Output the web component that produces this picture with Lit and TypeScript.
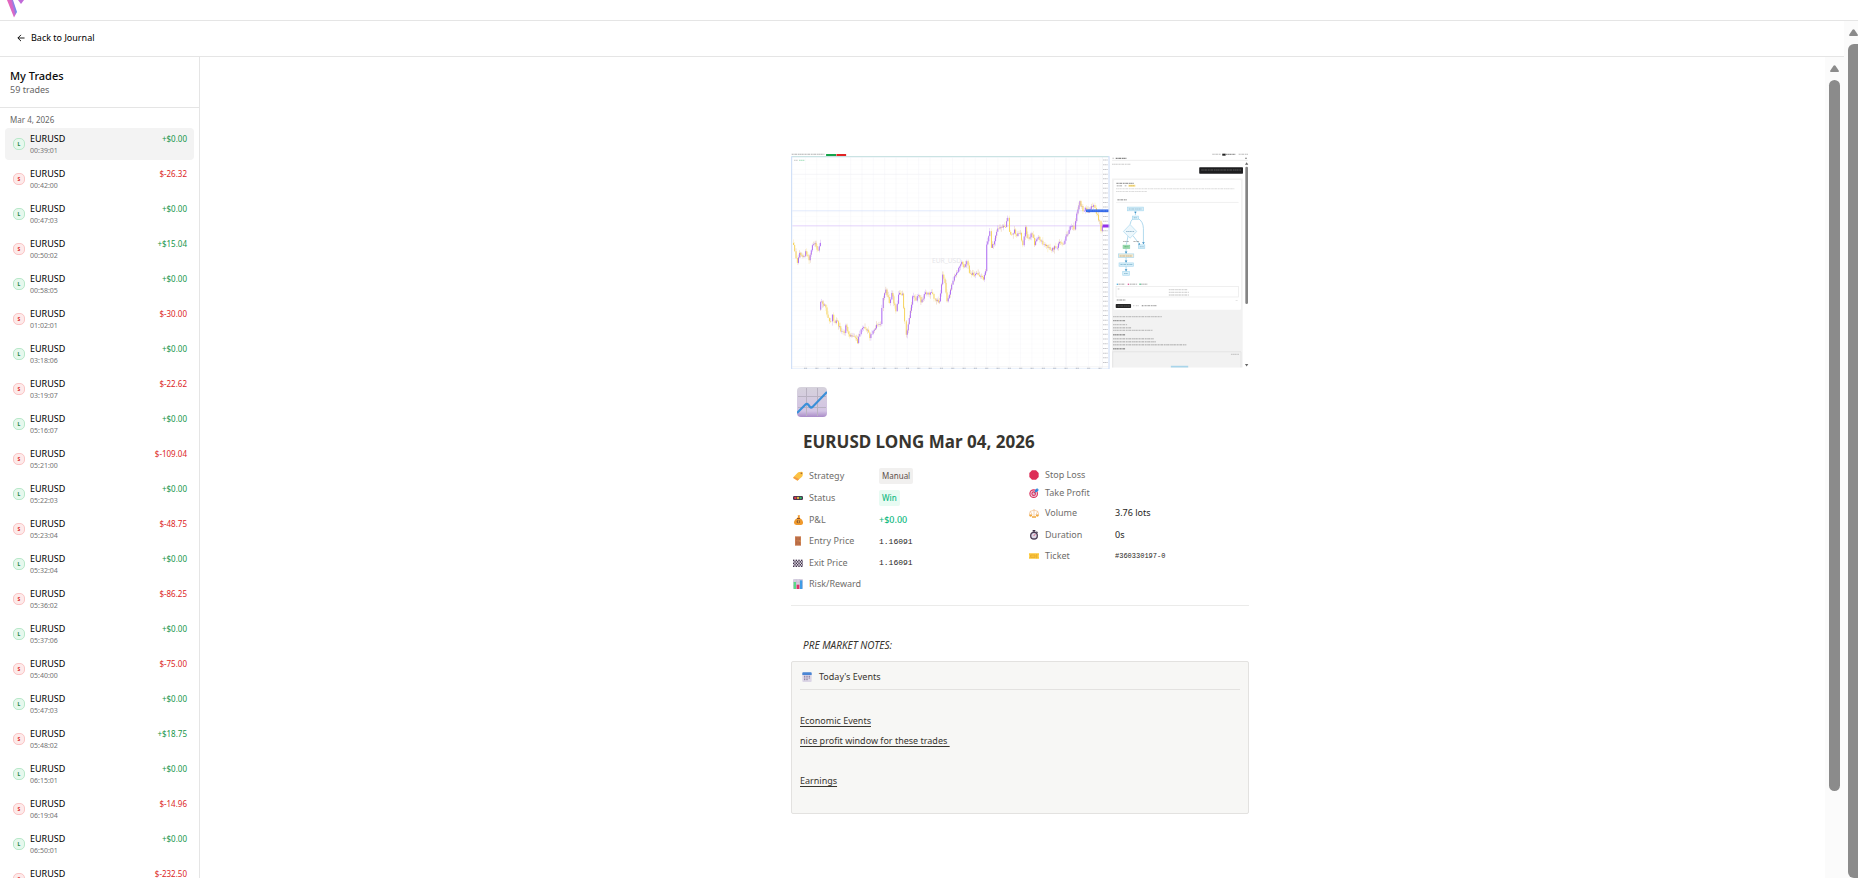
import { LitElement, html, css, svg, nothing } from "lit";
import { customElement } from "lit/decorators.js";

type Trade = [string, string, string];

const trades: Trade[] = [
  ["L", "00:39:01", "+$0.00"],
  ["S", "00:42:00", "$-26.32"],
  ["L", "00:47:03", "+$0.00"],
  ["S", "00:50:02", "+$15.04"],
  ["L", "00:58:05", "+$0.00"],
  ["S", "01:02:01", "$-30.00"],
  ["L", "03:18:06", "+$0.00"],
  ["S", "03:19:07", "$-22.62"],
  ["L", "05:16:07", "+$0.00"],
  ["S", "05:21:00", "$-109.04"],
  ["L", "05:22:03", "+$0.00"],
  ["S", "05:23:04", "$-48.75"],
  ["L", "05:32:04", "+$0.00"],
  ["S", "05:36:02", "$-86.25"],
  ["L", "05:37:06", "+$0.00"],
  ["S", "05:40:00", "$-75.00"],
  ["L", "05:47:03", "+$0.00"],
  ["S", "05:48:02", "+$18.75"],
  ["L", "06:15:01", "+$0.00"],
  ["S", "06:19:04", "$-14.96"],
  ["L", "06:50:01", "+$0.00"],
  ["S", "06:52:03", "$-232.50"],
];

const priceRuns: number[][] = [
  [40,305,47,330,55,365,62,335,75,345,80,330,90,357,100,312,108,305,117,328,124,305],
  [124,505,125,482,137,490,147,530,155,540,160,520,168,545,175,540,185,570,195,575,200,552,212,585,225,585,235,605,242,578,250,560,265,565,272,590,285,565,292,550,303,548,308,500,312,470,320,445,330,485,338,455,350,510,358,460,370,457,376,540,381,580,390,530,400,465,410,478,418,462,425,483,435,458,450,460,460,458,468,475,480,480,490,400,497,425,503,480,510,460,517,430,525,405,535,392,547,362,553,378,562,360,570,395,582,402,592,395,600,405,612,415,618,390,622,310,631,270,636,320,645,300,655,262,665,258,678,258,685,230,690,272,697,280,705,265,712,285,722,275,730,312,738,258,745,290,758,280,765,312,778,287,790,310,805,320,815,328,825,315,833,320,840,302,853,308,862,280,875,255,883,265,888,240,895,205,901,180,910,210,918,200,925,215,935,195,942,192,950,218,960,240,964,270,968,255],
];

const UP = "#b070f2";
const DOWN = "#f7d560";

function candles() {
  const out: unknown[] = [];
  let seed = 7;
  const rnd = () => (seed = (seed * 16807) % 2147483647) / 2147483647;
  for (const run of priceRuns) {
    let y = run[1];
    for (let i = 0; i + 3 < run.length; i += 2) {
      const [x0, y0, x1, y1] = run.slice(i, i + 4);
      const n = Math.max(1, Math.round((x1 - x0) / 3.4));
      for (let k = 1; k <= n; k++) {
        const x = x0 + ((x1 - x0) * k) / n;
        const target = y0 + ((y1 - y0) * k) / n + (k < n ? (rnd() - 0.5) * 12 : 0);
        const color = target <= y ? UP : DOWN;
        const top = Math.min(y, target);
        const h = Math.max(2, Math.abs(target - y));
        out.push(svg`<rect x=${x - 0.6} y=${top - 2 - rnd() * 9} width="1.2" height=${h + 6 + rnd() * 10} fill=${rnd() > 0.6 ? "#c98a5a" : color} opacity=".6"></rect>
          <rect x=${x - 1.5} y=${top} width="3" height=${h} fill=${color}></rect>`);
        y = target;
      }
    }
  }
  return out;
}

/* Rows of tiny dashes that stand for the unreadably small captions. */
const dash = (x: number, y: number, w: number, color = "#b5b5b5", h = 4) =>
  svg`<line x1=${x} y1=${y} x2=${x + w} y2=${y} stroke=${color} stroke-width=${h} stroke-dasharray="5 1 3 1 7 2" opacity=".55"></line>`;

const range = (a: number, b: number, step: number) => {
  const r: number[] = [];
  for (let v = a; v < b; v += step) r.push(v);
  return r;
};

const cover = svg`
  <rect x="36" y="36" width="1371" height="648" fill="#fff"></rect>
  ${dash(38, 40, 98, "#777", 3)}
  <rect x="141" y="39" width="30" height="6" fill="#16a34a"></rect>
  <rect x="172" y="39" width="29" height="6" fill="#e02424"></rect>
  ${dash(1297, 40, 26, "#888", 3)}
  <rect x="1327" y="38" width="10" height="6" fill="#222"></rect>
  ${dash(1338, 40, 28, "#444", 4)}${dash(1376, 40, 28, "#888", 3)}
  ${range(57, 660, 14.1).map((y) => svg`<path d="M40 ${y}H968" stroke="#f8f8fa" stroke-width="1"></path>`)}
  ${range(79, 965, 33.9).map((x) => svg`<path d="M${x} 50V676" stroke="#f5f5f8" stroke-width="1.5"></path>`)}
  <path d="M860 50V676M40 352H968M40 100H968" stroke="#efeff2" stroke-width="1.5"></path>
  <path d="M968 48V680M40 676H987" stroke="#e8e8ec" stroke-width="1.5"></path>
  ${range(57, 670, 14.1).map((y) => dash(970, y, 14, "#9a9aa2", 3))}
  ${range(75, 965, 33.9).map((x) => dash(x, 681, 10, "#8a8a90", 4))}
  <text class="mark" x="458" y="366">EUR_USD</text>
  <path d="M40 209H987" stroke="#d4e0fb" stroke-width="2"></path>
  <path d="M40 254H987" stroke="#e0cafa" stroke-width="2.5"></path>
  ${candles()}
  <rect x="919" y="205" width="68" height="8" fill="#2f66e8"></rect>
  ${dash(921, 209, 62, "#8fb0f8", 2)}
  <rect x="969" y="250" width="20" height="9" fill="#9333ea"></rect>
  <rect x="38" y="47" width="950" height="636" fill="none" stroke="#c8daf6" stroke-width="3"></rect>
  <path d="M40 47H985" stroke="#c4e6d4" stroke-width="2"></path>
  ${dash(45, 58, 12)}${dash(60, 58, 16, "#7fd6a3")}
  <path d="M997 58H1404" stroke="#e5e5e5" stroke-width="2"></path>
  ${dash(998, 52, 6)}${dash(1008, 52, 32, "#222", 4)}<rect x="1396" y="50" width="4" height="4" fill="#777"></rect>
  ${dash(997, 70, 56, "#a5a5a5", 3)}
  <rect x="1258" y="79" width="131" height="19" rx="2" fill="#1d1d1f"></rect>
  ${dash(1264, 87, 120, "#8c8c8c", 3)}
  <path d="M997 112H1388V678H997Z" fill="#f2f2f2"></path>
  <rect x="1002" y="117" width="381" height="388" rx="3" fill="#fff"></rect>
  ${dash(1010, 127, 52, "#555", 4)}${dash(1011, 134, 16, "#999")}${dash(1035, 134, 5, "#999")}
  <rect x="1046" y="131" width="21" height="6" fill="#fbe7a0"></rect>${dash(1048, 134, 16, "#c9a227", 3)}
  ${dash(1009, 143, 354, "#c0c0c0", 3)}${dash(1009, 151, 92, "#c0c0c0", 3)}
  ${dash(1013, 176, 28, "#777", 4)}
  <path d="M1009 184H1376" stroke="#eaeaea" stroke-width="2"></path>
  <g fill="#d9eff9" stroke="#a9d8ee" stroke-width="2">
    <path d="M1067 210V222M1060 232Q1052 240 1051 250M1075 232Q1090 240 1091 262V306M1045 284L1040 310M1060 284L1080 310M1039 322V396" fill="none" stroke="#8cc8e6"></path>
    <rect x="1043" y="198" width="48" height="11"></rect>
    <rect x="1058" y="225" width="18" height="10"></rect>
    <path d="M1051 250L1071 271L1051 291L1031 271Z" fill="#edf7fc"></path>
    <rect x="1030" y="312" width="20" height="10" fill="#9fdcb0" stroke="#86cfa0"></rect>
    <rect x="1076" y="311" width="19" height="11"></rect>
    <rect x="1016" y="338" width="46" height="11" fill="#f7ead0"></rect>
    <rect x="1018" y="365" width="43" height="10"></rect>
    <rect x="1029" y="391" width="20" height="11"></rect>
  </g>
  <path d="M1067 217l-4 -5h8ZM1039 337l-4 -6h8ZM1039 364l-4 -6h8ZM1039 390l-4 -6h8ZM1081 311l-6-1 4-5ZM1091 309l-4-6h8Z" fill="#3a8fc4"></path>
  ${dash(1047, 204, 40, "#5b9dbd", 3)}${dash(1062, 230, 10, "#5b9dbd", 3)}${dash(1039, 271, 24, "#5b8fad", 3)}
  ${dash(1034, 317, 12, "#2f8a4c", 3)}${dash(1080, 317, 12, "#5b9dbd", 3)}${dash(1020, 344, 38, "#9a8a5a", 3)}
  ${dash(1022, 370, 36, "#5b9dbd", 3)}${dash(1033, 397, 12, "#5b9dbd", 3)}${dash(1030, 301, 18, "#777", 3)}${dash(1061, 301, 18, "#777", 3)}
  ${dash(1016, 429, 20, "#999")}${dash(1050, 429, 22, "#999")}${dash(1084, 429, 20, "#999")}
  <path d="M1011 429h4" stroke="#58b4e0" stroke-width="4"></path><path d="M1044 429h4" stroke="#e0589a" stroke-width="4"></path><path d="M1079 429h4" stroke="#50c088" stroke-width="4"></path>
  <rect x="1009" y="436" width="367" height="31" fill="none" stroke="#e8e8e8" stroke-width="2"></rect>
  ${dash(1014, 443, 6)}${dash(1167, 445, 56)}${dash(1167, 453, 60)}${dash(1167, 461, 60)}
  ${dash(1011, 476, 26, "#777")}<path d="M1368 477l2 2 2-2" stroke="#888" fill="none"></path>
  <rect x="1008" y="488" width="46" height="12" rx="2" fill="#262626"></rect>${dash(1014, 494, 36, "#777", 3)}
  ${dash(1060, 493, 4)}${dash(1068, 493, 10)}${dash(1086, 493, 5, "#555")}${dash(1094, 493, 36, "#777")}
  ${dash(1000, 526, 146, "#999")}${dash(1000, 538, 36, "#555")}
  ${dash(1000, 550, 42, "#999")}${dash(1000, 559, 54, "#999")}${dash(1000, 567, 118, "#999")}
  ${dash(1000, 580, 36, "#555")}
  ${dash(1000, 592, 122, "#999")}${dash(1000, 601, 128, "#999")}${dash(1000, 610, 220, "#999")}
  ${dash(1000, 622, 38, "#555")}
  <path d="M999 678V631H1383V678" fill="none" stroke="#e0e0e0" stroke-width="2"></path>
  ${dash(1353, 639, 24, "#aaa")}
  <rect x="1173" y="673" width="52" height="5" fill="#a8d5ea"></rect>
  <rect x="1396" y="77" width="8" height="411" rx="4" fill="#858585"></rect>
  <path d="M1395 71l5-7 5 7ZM1395 668l5 7 5-7Z" fill="#666"></path>`;

const icons: Record<string, unknown> = {
  chart: svg`
    <defs><linearGradient id="g" x1="0" y1="0" x2="0" y2="1"><stop offset="0" stop-color="#d6d2dc"></stop><stop offset=".8" stop-color="#d3c4e4"></stop><stop offset="1" stop-color="#a98bc8"></stop></linearGradient></defs>
    <rect width="30" height="30" rx="4" fill="url(#g)"></rect>
    <path d="M9.500 1V29M20.500 1V29M1 9.500H29M1 20.500H29" stroke="#b9b2c2" stroke-width="1"></path>
    <path d="M0 26L8.500 17.500Q10 16 11.500 18L13 20Q14 21 15.500 20L30 5" fill="none" stroke="#3a8fd8" stroke-width="2.200"></path>`,
  tag: svg`<path d="M1 19L14 5q2-2 5-2l8-1 3 3-1 8q0 2-2 4L15 28q-2 2-4 0L1 22q-1-1 0-3Z" fill="#fcc344"></path><path d="M1 20l11 8q2 1 4-1l2-3L4 17Z" fill="#f3994a"></path><circle cx="25" cy="7" r="2.500" fill="#a5643c"></circle>`,
  light: svg`<rect x="0" y="9" width="30" height="12" rx="4" fill="#46364e"></rect><circle cx="7" cy="15" r="3.500" fill="#e8384e"></circle><circle cx="15" cy="15" r="3.500" fill="#e8b83a"></circle><circle cx="23" cy="15" r="3.500" fill="#2fb86a"></circle>`,
  bag: svg`<path d="M14 1h7l-1 4 1 5q8 3 9 11 1 8-6 9H10q-8-1-7-9 1-8 10-12l2-4Z" fill="#f0992c"></path><path d="M12 9h9v3h-9Z" fill="#8a5230"></path><circle cx="16" cy="20" r="5" fill="#7d4a28"></circle><path d="M18 18q-4-2-4 0t4 2-4 2M16 16v9" fill="none" stroke="#f6bb4a" stroke-width="1.500"></path>`,
  door: svg`<rect x="6" y="1" width="18" height="28" fill="#c97b50"></rect><path d="M9 4h5v9H9ZM16 4h5v9h-5ZM9 16h5v10H9ZM16 16h5v10h-5Z" fill="#b56a45"></path><circle cx="21" cy="15" r="1.500" fill="#f5d060"></circle>`,
  flag: svg`<rect y="5" width="30" height="22" fill="#e6e0ea"></rect>${range(0, 5, 1).map((r) => range(0, 4, 1).map((c) => svg`<rect x=${c * 8 + (r % 2) * 4} y=${5 + r * 4.4} width="4" height="4.400" fill="#40334a"></rect>`))}`,
  bars: svg`<rect width="30" height="30" rx="3" fill="#d6cfe0"></rect><path d="M10 1V29M20 1V29M1 10H29M1 20H29" stroke="#b8b0c4"></path><rect x="2" y="9" width="7" height="21" fill="#5ad888"></rect><rect x="11" y="17" width="8" height="13" fill="#e0306a"></rect><rect x="21" y="4" width="7" height="26" fill="#3f9ce6"></rect>`,
  stop: svg`<path d="M9 1h12l8 8v12l-8 8H9l-8-8V9Z" fill="#dd2e57"></path>`,
  target: svg`<circle cx="14" cy="17" r="13" fill="#d92f5e"></circle><circle cx="14" cy="17" r="9.500" fill="#f2dfe8"></circle><circle cx="14" cy="17" r="7" fill="#d92f5e"></circle><circle cx="14" cy="17" r="3.500" fill="#f2dfe8"></circle><path d="M14 17L24 7" stroke="#4a4a80" stroke-width="2"></path><path d="M18 12V6l7-6 1 4 4 1-6 7Z" fill="#2f88dc"></path>`,
  scale: svg`<path d="M15 3V24M4 10Q15 3 26 10M4 10l-4 10h9ZM26 10l-5 10h9Z" fill="none" stroke="#f0bd88" stroke-width="2"></path><path d="M0 20h10q-1 6-5 6t-5-6ZM20 20h10q-1 6-5 6t-5-6ZM9 25h12v4H9Z" fill="#f2a83c"></path>`,
  watch: svg`<path d="M11 0h8v5h-8ZM23 4l4 3-3 3-3-3Z" fill="#40334a"></path><circle cx="15" cy="17" r="12" fill="#4a3c56"></circle><circle cx="15" cy="17" r="8" fill="#ded8e6"></circle><path d="M14 18L19 12" stroke="#e0305a" stroke-width="2"></path>`,
  ticket: svg`<path d="M0 7h30v6q-3 2 0 4v6H0v-6q3-2 0-4Z" fill="#fcc83a"></path><path d="M5 12h13v7H5ZM23 9v13" fill="none" stroke="#e0a030" stroke-width="2"></path>`,
  cal: svg`<path d="M1 2h28v25q0 3-3 3H4q-3 0-3-3Z" fill="#dcd6e6"></path><path d="M1 9V3q0-2 3-2h22q3 0 3 2v6Z" fill="#4a86d4"></path><path d="M6 13h4M13 13h4M20 13h4M6 18h4M13 18h4M20 18h4M6 23h4M13 23h4" stroke="#877a9c" stroke-width="3"></path>`,
};

const icon = (name: string, cls = "ico") =>
  html`<svg class=${cls} viewBox="0 0 30 30" aria-hidden="true">${icons[name]}</svg>`;

@customElement("app-root")
export class AppRoot extends LitElement {
  static styles = css`
    :host { display: flex; flex-direction: column; height: 100vh; overflow: hidden; background: #fff; color: #0a0a0a;
      font-family: "Noto Sans", "Open Sans", sans-serif; font-size: 9px; line-height: 12px; }
    * { box-sizing: border-box; }
    h1, h2, p, dl, dd, dt, ul { margin: 0; padding: 0; font-weight: inherit; }
    .brand { flex: none; height: 21px; border-bottom: 1px solid #e5e5e5; padding-left: 6px; }
    .brand svg { display: block; width: 18px; height: 18px; }
    .shell { flex: 1; min-height: 0; display: flex; }
    .page { flex: 1; min-width: 0; display: flex; flex-direction: column; }
    .bar { flex: none; height: 36px; display: flex; align-items: center; border-bottom: 1px solid #e5e5e5; padding: 0 0 2px 17px; }
    button { font: inherit; color: inherit; background: none; border: 0; padding: 0; text-align: left; cursor: pointer; }
    .back { display: flex; align-items: center; gap: 6px; color: #000; }
    .back svg { width: 8px; height: 8px; }
    .body { flex: 1; min-height: 0; display: flex; }
    .side { flex: none; width: 200px; border-right: 1px solid #e5e5e5; overflow: hidden; }
    .head { height: 51px; border-bottom: 1px solid #e5e5e5; padding: 11px 10px; }
    .head h2 { font-size: 11px; line-height: 16px; font-weight: 500; }
    .head p { color: #666; }
    .day { padding: 6px 10px 2px; color: #666; font-size: 8px; }
    .list { list-style: none; display: flex; flex-direction: column; gap: 3px; padding: 0 5px; }
    .trade { width: 100%; height: 32px; padding: 4px 7px 4px 8px; border-radius: 4px; display: grid; grid-template: 13px 11px / 12px 1fr auto; column-gap: 5px; align-items: center; line-height: 11px; }
    .trade.on { background: #f3f3f3; }
    .side-tag { grid-row: span 2; width: 12px; height: 12px; border-radius: 5px; border: 1px solid #b7e8c9; background: #e6f8ed; color: #15803d; font-size: 5px; line-height: 10px; font-weight: 700; text-align: center; }
    .side-tag.s { border-color: #fbc4c4; background: #fdeaea; color: #dc2626; }
    .sym { color: #000; }
    .amt { color: #16954a; font-size: 8px; }
    .amt.neg { color: #dc2626; }
    .time { color: #737373; font-size: 7px; grid-column: 2 / 4; }
    .main { flex: 1; min-width: 0; display: flex; justify-content: center; align-items: flex-start; padding: 96px 0 0 15px; }
    .doc { width: 458px; color: #37352f; }
    .cover { display: block; width: 100%; }
    .mark { font: 20px "Noto Sans", sans-serif; fill: #e6e6ea; }
    .emoji { display: block; width: 30px; height: 30px; margin: 18px 0 0 6px; }
    h1 { font-size: 17px; line-height: 26px; font-weight: 700; margin: 12px 0 0 12px; }
    .props { display: grid; grid-template-columns: 236px 1fr; margin-top: 10px; align-items: start; }
    .col { display: flex; flex-direction: column; padding-left: 2px; }
    .col + .col { padding-top: 1px; }
    .prop { display: grid; grid-template-columns: 10px 64px 1fr; column-gap: 6px; align-items: center; height: 22px; }
    .prop.mid { height: 21px; }
    .prop.short { height: 18px; }
    .ico { width: 10px; height: 10px; display: block; }
    dt { color: #6f6e6b; }
    dd { color: #1f1e1b; }
    .pill { display: inline-block; border-radius: 2px; padding: 2px 3px; background: #f1f0ef; color: #5c4f4a; font-size: 8px; }
    .pill.win { background: #e8fbf3; color: #10b981; font-weight: 500; }
    .pos { color: #10b981; font-weight: 500; }
    .mono { font-family: "Liberation Mono", monospace; font-size: 8px; }
    .mono.sm { font-size: 7px; }
    .rule { border: 0; border-top: 1px solid #ebebea; margin: 11px 0 0; }
    .pre { font-size: 10px; font-style: italic; margin: 33px 0 10px 12px; }
    .card { border: 1px solid #e3e2e0; border-radius: 2px; background: #f7f7f5; padding: 0 8px 22px; }
    .card-head { display: flex; align-items: center; gap: 7px; height: 28px; border-bottom: 1px solid #e3e2e0; padding: 3px 2px 0; margin-bottom: 21px; }
    .card p { height: 20px; line-height: 20px; text-decoration: underline; text-underline-offset: 2px; white-space: pre; }
    .scroll { flex: none; width: 19px; background: #fbfbfb; display: flex; flex-direction: column; align-items: center; gap: 8px; padding-top: 8px; }
    .scroll.outer { width: 14px; align-items: flex-end; overflow: hidden; }
    .arrow { width: 9px; height: 7px; flex: none; }
    .thumb { width: 11px; border-radius: 6px; background: #8b8b8b; height: 87.5%; }
    .outer .thumb { width: 10px; height: auto; flex: 1; border-radius: 6px 0 0 6px; }
  `;

  private prop(ic: string, label: string, value: unknown = nothing, size = "") {
    return html`<div class="prop ${size}">${icon(ic)}<dt>${label}</dt><dd>${value}</dd></div>`;
  }

  private arrow() {
    return html`<svg class="arrow" viewBox="0 0 9 7" aria-hidden="true"><path d="M3.500 .8q1-1 2 0L9 6q0 1-1 1H1Q0 7 0 6Z" fill="#8b8b8b"></path></svg>`;
  }

  render() {
    return html`
      <header class="brand">
        <svg viewBox="0 0 18 18" aria-hidden="true">
          <defs><linearGradient id="v" x1="0" y1=".5" x2="1" y2=".1"><stop offset="0" stop-color="#f062b0"></stop><stop offset=".5" stop-color="#d868c8"></stop><stop offset=".75" stop-color="#6b8cf0"></stop><stop offset="1" stop-color="#5b8cf0"></stop></linearGradient></defs>
          <path d="M1 0H7L11 12L8 17.500Z" fill="url(#v)"></path><path d="M12 0H18L15 4Z" fill="#c06ad8"></path>
        </svg>
      </header>
      <div class="shell">
        <div class="page">
          <nav class="bar">
            <button class="back"><svg viewBox="0 0 9 9" fill="none" stroke="currentColor" aria-hidden="true"><path d="M8.500 4.500H1M4.500 1L1 4.500L4.500 8"></path></svg>Back to Journal</button>
          </nav>
          <div class="body">
            <aside class="side">
              <div class="head"><h2>My Trades</h2><p>59 trades</p></div>
              <p class="day">Mar 4, 2026</p>
              <ul class="list">
                ${trades.map(([s, t, a], i) => html`<li><button class="trade ${i === 0 ? "on" : ""}">
                  <span class="side-tag ${s === "S" ? "s" : ""}">${s}</span><span class="sym">EURUSD</span><span class="amt ${a[0] === "$" ? "neg" : ""}">${a}</span><span class="time">${t}</span></button></li>`)}
              </ul>
            </aside>
            <main class="main">
              <article class="doc">
                <svg class="cover" viewBox="36 36 1371 648" role="img" aria-label="Chart screenshot">${cover}</svg>
                ${icon("chart", "emoji")}
                <h1>EURUSD LONG Mar 04, 2026</h1>
                <div class="props">
                  <dl class="col">
                    ${this.prop("tag", "Strategy", html`<span class="pill">Manual</span>`)}
                    ${this.prop("light", "Status", html`<span class="pill win">Win</span>`)}
                    ${this.prop("bag", "P&L", html`<span class="pos">+$0.00</span>`, "mid")}
                    ${this.prop("door", "Entry Price", html`<span class="mono">1.16091</span>`)}
                    ${this.prop("flag", "Exit Price", html`<span class="mono">1.16091</span>`, "mid")}
                    ${this.prop("bars", "Risk/Reward", nothing, "mid")}
                  </dl>
                  <dl class="col">
                    ${this.prop("stop", "Stop Loss", nothing, "short")}
                    ${this.prop("target", "Take Profit", nothing, "short")}
                    ${this.prop("scale", "Volume", "3.76 lots")}
                    ${this.prop("watch", "Duration", "0s", "mid")}
                    ${this.prop("ticket", "Ticket", html`<span class="mono sm">#360330197-0</span>`, "mid")}
                  </dl>
                </div>
                <hr class="rule" />
                <p class="pre">PRE MARKET NOTES:</p>
                <section class="card">
                  <div class="card-head">${icon("cal")}<span>Today's Events</span></div>
                  <p>Economic Events</p>
                  <p>nice profit window for these trades </p>
                  <p></p>
                  <p>Earnings</p>
                </section>
              </article>
            </main>
            <div class="scroll">${this.arrow()}<div class="thumb"></div></div>
          </div>
        </div>
        <div class="scroll outer">${this.arrow()}<div class="thumb"></div></div>
      </div>`;
  }
}
